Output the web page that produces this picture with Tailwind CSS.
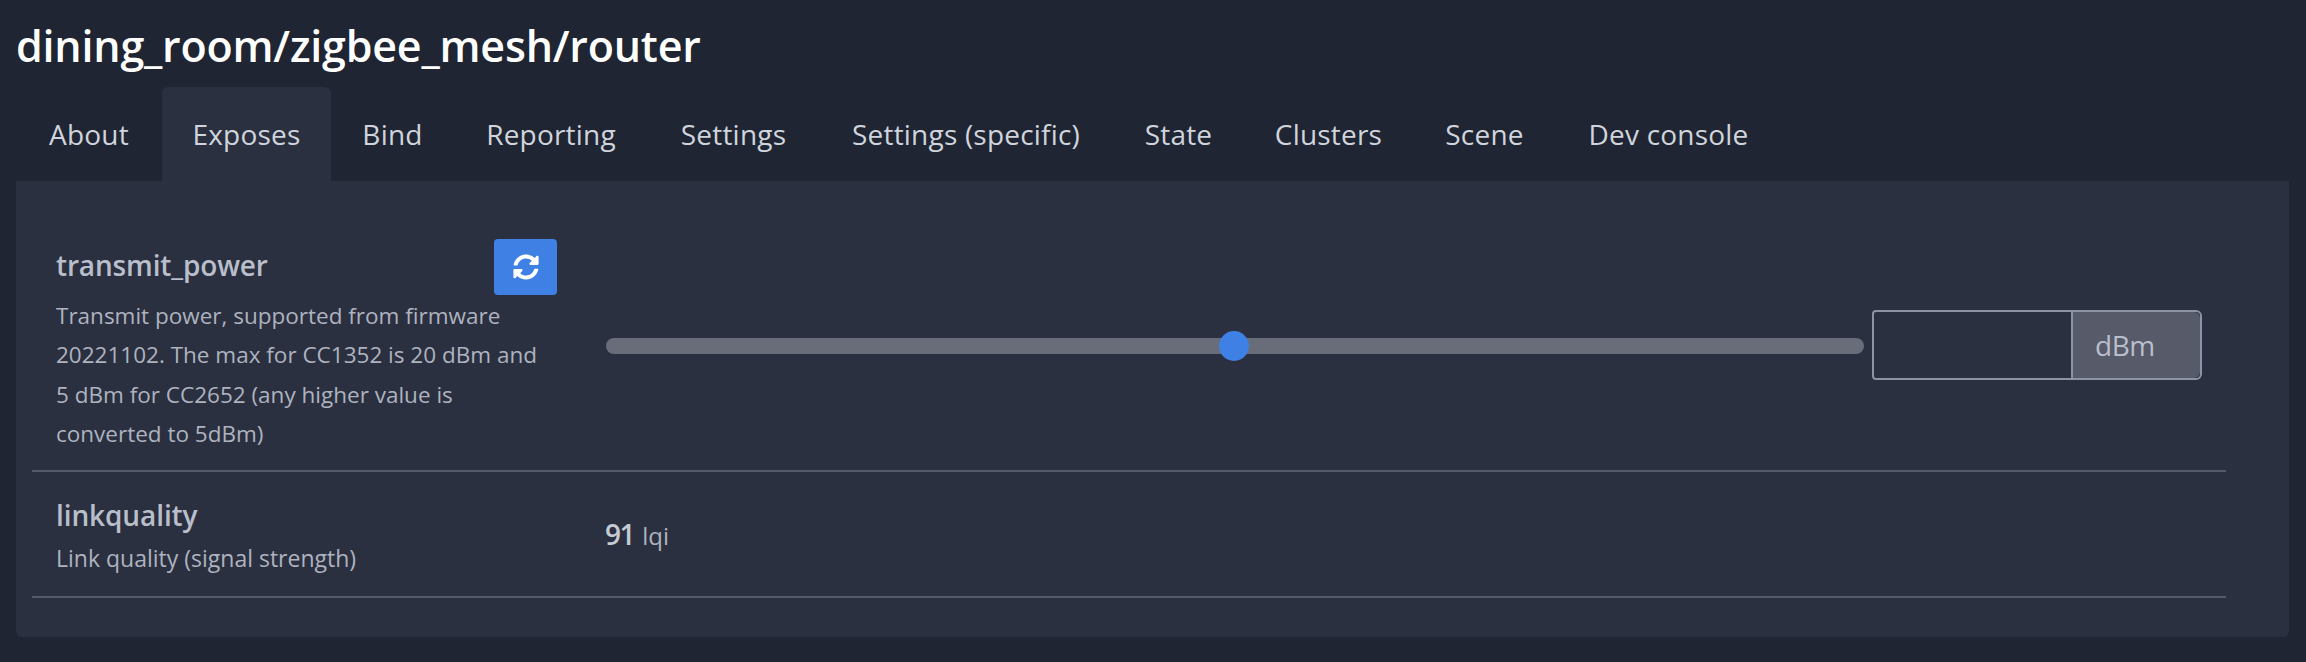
<!doctype html>
<html lang="en">
  <head>
    <meta charset="UTF-8" />
    <title>dining_room/zigbee_mesh/router</title>
    <script src="https://cdn.jsdelivr.net/npm/@tailwindcss/browser@4"></script>
  </head>
  <body class="bg-[#1f2532] h-[662px] overflow-hidden font-['Open_Sans',sans-serif] text-[#c5cad4]">
    <div class="pl-4 pr-[17px]">
      <h1 class="h-[87px] pt-[16px] text-[43px] leading-[60px] font-semibold text-white tracking-[-0.2px]">dining_room/zigbee_mesh/router</h1>

      <div class="flex h-[94px] text-[28px] tracking-[0.2px] text-[#d0d4dc]">
        <a class="w-[146px] flex items-center justify-center">About</a>
        <a class="w-[169px] flex items-center justify-center bg-[#2a3040] rounded-t-md">Exposes</a>
        <a class="w-[123px] flex items-center justify-center">Bind</a>
        <a class="w-[194px] flex items-center justify-center">Reporting</a>
        <a class="w-[171px] flex items-center justify-center">Settings</a>
        <a class="w-[294px] flex items-center justify-center">Settings (specific)</a>
        <a class="w-[131px] flex items-center justify-center">State</a>
        <a class="w-[169px] flex items-center justify-center">Clusters</a>
        <a class="w-[143px] flex items-center justify-center">Scene</a>
        <a class="w-[225px] flex items-center justify-center">Dev console</a>
      </div>

      <div class="bg-[#2a3040] rounded-b-md h-[456px] pt-[52px] pl-4 pr-[63px]">
        <!-- transmit_power -->
        <div class="flex items-center h-[239px] px-6 pb-[16px] border-b-2 border-[#555a69]">
          <div class="w-[550px] shrink-0 pr-[49px]">
            <div class="flex justify-between h-[62px]">
              <div class="text-[28px] leading-[62px] font-semibold text-[#b9bfca] tracking-[-0.15px]">transmit_power</div>
              <button class="w-[63px] h-[56px] mt-[5px] bg-[#3f80e4] rounded flex items-center justify-center">
                <svg class="w-[26px] h-[26px] text-white" viewBox="0 0 512 512" fill="currentColor"><path d="M370.72 133.28C339.458 104.008 298.888 87.962 255.848 88c-77.458.068-144.328 53.178-162.791 126.85-1.344 5.363-6.122 9.15-11.651 9.15H24.103c-7.498 0-13.194-6.807-11.807-14.176C33.933 94.924 134.813 8 256 8c66.448 0 126.791 26.136 171.315 68.685L463.03 40.97C478.149 25.851 504 36.559 504 57.941V192c0 13.255-10.745 24-24 24H345.941c-21.382 0-32.09-25.851-16.971-40.971l41.75-41.749zM32 296h134.059c21.382 0 32.09 25.851 16.971 40.971l-41.75 41.75c31.262 29.273 71.835 45.319 114.876 45.28 77.418-.07 144.315-53.144 162.787-126.849 1.344-5.363 6.122-9.15 11.651-9.15h57.304c7.498 0 13.194 6.807 11.807 14.176C478.067 417.076 377.187 504 256 504c-66.448 0-126.791-26.136-171.315-68.685L48.97 471.03C33.851 486.149 8 475.441 8 454.059V320c0-13.255 10.745-24 24-24z"/></svg>
              </button>
            </div>
            <p class="pr-[12px] text-[22.5px] leading-[39.5px] text-[#aeb3bf]">Transmit power, supported from firmware 20221102. The max for CC1352 is 20 dBm and 5 dBm for CC2652 (any higher value is converted to 5dBm)</p>
          </div>
          <div class="flex-1 flex items-center pt-[2px]">
            <div class="relative flex-1 h-4 mt-[2px] rounded-full bg-[#696d79] mr-2">
              <div class="absolute left-[613px] top-[-7px] w-[30px] h-[30px] rounded-full bg-[#3f80e4]"></div>
            </div>
            <div class="flex w-[330px] h-[70px] border-2 border-[#8d93a5] rounded-r-md rounded-l-sm">
              <div class="w-[197px]"></div>
              <div class="flex-1 flex items-center pl-[22px] bg-[#565a69] border-l-2 border-[#8d93a5] text-[28px] text-[#b9bfca] rounded-r-md tracking-[-0.5px]">dBm</div>
            </div>
          </div>
        </div>

        <!-- linkquality -->
        <div class="flex items-center h-[126px] px-6 pt-[2px] border-b-2 border-[#555a69]">
          <div class="w-[550px] shrink-0">
            <div class="text-[28px] leading-[46px] font-semibold text-[#b9bfca] tracking-[-0.1px]">linkquality</div>
            <p class="text-[23px] leading-[40px] text-[#aeb3bf]">Link quality (signal strength)</p>
          </div>
          <div class="flex-1 -ml-[1px] pb-[2px] text-[28px] text-[#c5cad4]"><span class="font-semibold tracking-[-1.5px]">91</span> <span class="ml-[1px] text-[24px] text-[#aeb3bf]">lqi</span></div>
        </div>
      </div>
    </div>
  </body>
</html>
